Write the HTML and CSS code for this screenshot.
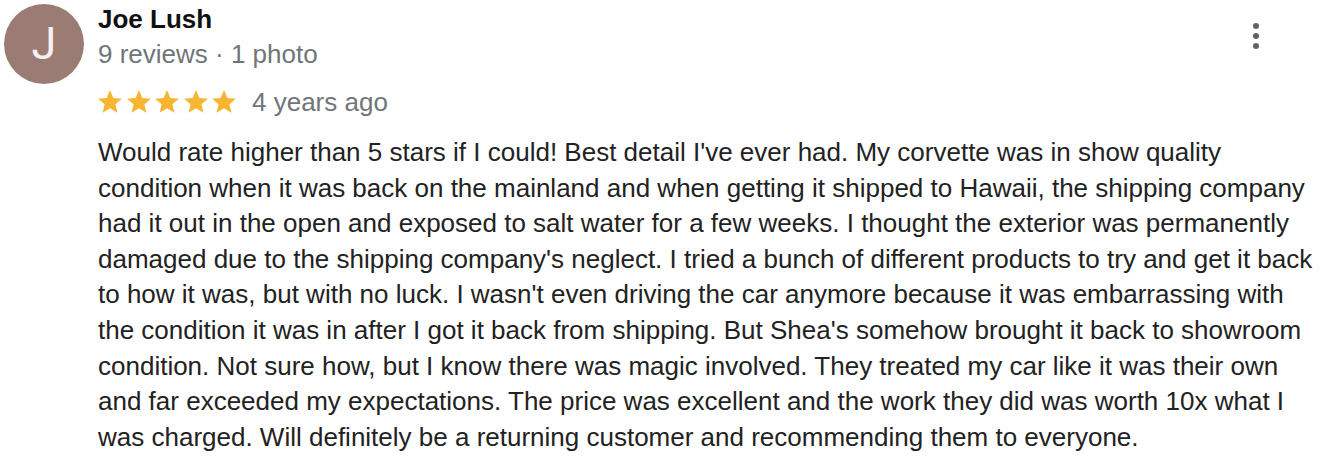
FILE: index.html
```html
<!DOCTYPE html>
<html>
<head>
<meta charset="utf-8">
<link rel="stylesheet" href="styles.css">
</head>
<body>
<div class="review">
  <div class="header">
    <div class="avatar">J</div>
    <div class="info">
      <div class="name">Joe Lush</div>
      <div class="meta">9 reviews · 1 photo</div>
      <div class="rating">
        <span class="stars">
          <svg class="star" viewBox="2 2 20 19.3"><path d="M12 17.27L18.18 21l-1.64-7.03L22 9.24l-7.19-.61L12 2 9.19 8.63 2 9.24l5.46 4.73L5.82 21z"/></svg>
          <svg class="star" viewBox="2 2 20 19.3"><path d="M12 17.27L18.18 21l-1.64-7.03L22 9.24l-7.19-.61L12 2 9.19 8.63 2 9.24l5.46 4.73L5.82 21z"/></svg>
          <svg class="star" viewBox="2 2 20 19.3"><path d="M12 17.27L18.18 21l-1.64-7.03L22 9.24l-7.19-.61L12 2 9.19 8.63 2 9.24l5.46 4.73L5.82 21z"/></svg>
          <svg class="star" viewBox="2 2 20 19.3"><path d="M12 17.27L18.18 21l-1.64-7.03L22 9.24l-7.19-.61L12 2 9.19 8.63 2 9.24l5.46 4.73L5.82 21z"/></svg>
          <svg class="star" viewBox="2 2 20 19.3"><path d="M12 17.27L18.18 21l-1.64-7.03L22 9.24l-7.19-.61L12 2 9.19 8.63 2 9.24l5.46 4.73L5.82 21z"/></svg>
        </span>
        <span class="date">4 years ago</span>
      </div>
    </div>
    <div class="menu"><span class="dot"></span><span class="dot"></span><span class="dot"></span></div>
  </div>
  <p class="text">Would rate higher than 5 stars if I could! Best detail I've ever had. My corvette was in show quality condition when it was back on the mainland and when getting it shipped to Hawaii, the shipping company had it out in the open and exposed to salt water for a few weeks. I thought the exterior was permanently damaged due to the shipping company's neglect. I tried a bunch of different products to try and get it back to how it was, but with no luck. I wasn't even driving the car anymore because it was embarrassing with the condition it was in after I got it back from shipping. But Shea's somehow brought it back to showroom condition. Not sure how, but I know there was magic involved. They treated my car like it was their own and far exceeded my expectations. The price was excellent and the work they did was worth 10x what I was charged. Will definitely be a returning customer and recommending them to everyone.</p>
</div>
</body>
</html>
```

FILE: styles.css
```css
html, body {
  margin: 0;
  padding: 0;
  background: #ffffff;
}
body {
  font-family: "Liberation Sans", Arial, sans-serif;
  color: #222222;
}
.review {
  padding: 4px 0 0 4px;
}
.header {
  display: flex;
  align-items: flex-start;
}
.avatar {
  width: 80px;
  height: 80px;
  border-radius: 50%;
  background: #9b7c74;
  color: #f7f0ee;
  font-family: Roboto, "Liberation Sans", sans-serif;
  font-weight: 400;
  font-size: 45px;
  line-height: 80px;
  text-align: center;
  flex: none;
  margin-right: 14px;
}
.info {
  flex: 1;
}
.name {
  margin-top: 0;
  font-size: 26px;
  line-height: 30px;
  font-weight: bold;
  color: #111111;
}
.meta {
  margin-top: 3px;
  font-size: 26px;
  line-height: 34px;
  color: #70757a;
}
.rating {
  margin-top: 13px;
  display: flex;
  align-items: center;
  height: 36px;
}
.stars {
  display: flex;
  gap: 4.5px;
  margin-top: -2px;
}
.star {
  width: 24px;
  height: 23px;
  fill: #f6b631;
  display: block;
}
.date {
  margin-left: 16px;
  font-size: 26px;
  line-height: 36px;
  color: #70757a;
}
.menu {
  display: flex;
  flex-direction: column;
  align-items: center;
  gap: 4px;
  width: 12px;
  margin-top: 19px;
  margin-right: 58px;
}
.dot {
  width: 6px;
  height: 6px;
  border-radius: 50%;
  background: #5f6368;
}
.text {
  margin: 15px 0 0 94px;
  font-size: 26px;
  line-height: 35.6px;
  color: #222222;
}
```
